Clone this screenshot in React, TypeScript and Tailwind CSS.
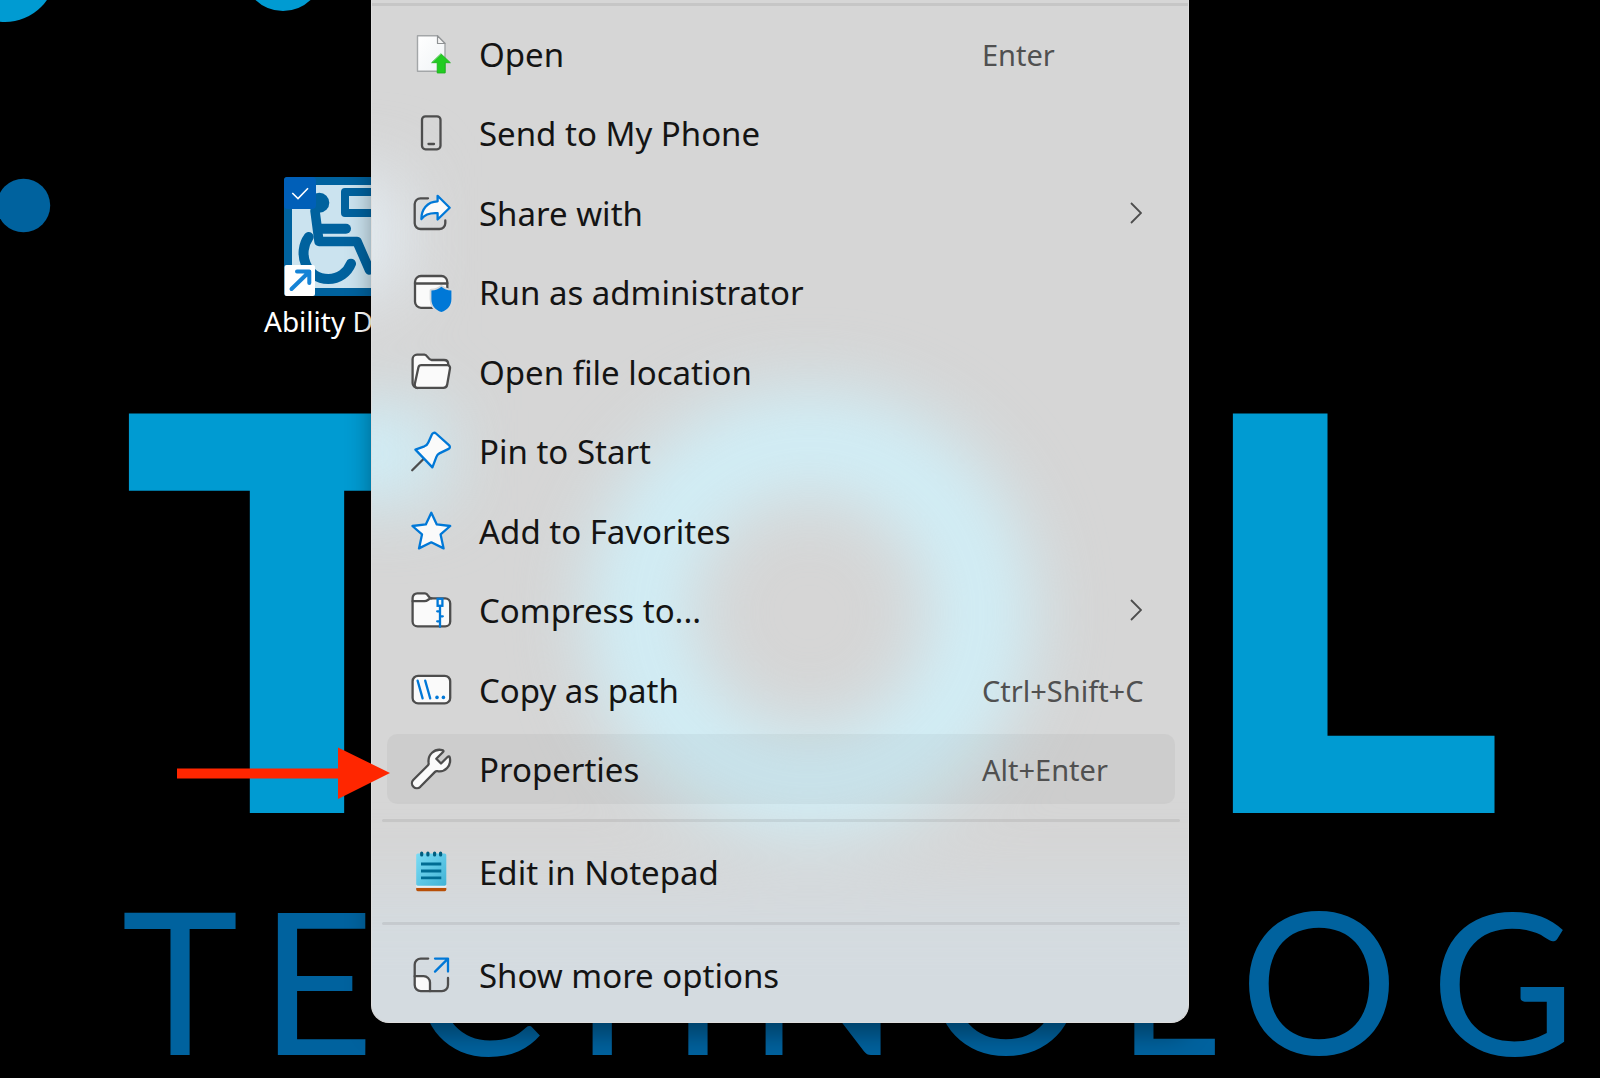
import type { ReactNode } from "react";

const GREY = "#4d4d4d";
const BLUE = "#0078d7";
const PAPER = "#fafafa";

function Icon({ children }: { children: ReactNode }) {
  return (
    <svg
      viewBox="0 0 40 40"
      className="size-10 shrink-0 overflow-visible"
      fill="none"
      strokeWidth="2.3"
      strokeLinecap="round"
      strokeLinejoin="round"
      aria-hidden="true"
    >
      {children}
    </svg>
  );
}

const OpenIcon = () => (
  <Icon>
    <defs>
      <linearGradient id="page" x1="0" y1="0" x2="1" y2="1">
        <stop offset="0" stopColor="#ffffff" />
        <stop offset="1" stopColor="#f0f3f6" />
      </linearGradient>
    </defs>
    <path d="M6.5 1.8H26.5L34 9.5V37.3H6.5Z" fill="url(#page)" stroke="#a3a6a8" strokeWidth="1.4" />
    <path d="M26.5 1.8V9.5H34Z" fill="#f4f4f4" stroke="#8f9294" strokeWidth="1.2" />
    <path d="M30.2 20L39.4 28.7H34.2V39H26.2V28.7H21Z" fill="#22cc22" stroke="#19b019" strokeWidth="0.8" strokeLinejoin="miter" />
  </Icon>
);

const PhoneIcon = () => (
  <Icon>
    <rect x="11" y="3.3" width="18.5" height="33" rx="3.5" stroke={GREY} />
    <path d="M17.5 31H23" stroke={GREY} />
  </Icon>
);

const ShareIcon = () => (
  <Icon>
    <path d="M17 5.3H9.5A5.8 5.8 0 0 0 3.7 11V30.3A5.8 5.8 0 0 0 9.5 36H28.5A5.8 5.8 0 0 0 34.3 30.3V27.5" stroke={GREY} />
    <path d="M10.4 26C10.4 16.5 16 8.6 26.6 8.3V2.8L38.7 14.7L26.6 26.5V20.2C19.5 19.6 14 21.4 10.4 26Z" fill={PAPER} stroke={BLUE} />
  </Icon>
);

const AdminIcon = () => (
  <Icon>
    <rect x="4" y="4" width="32.3" height="31.8" rx="6" fill={PAPER} stroke={GREY} />
    <path d="M4 11.5H36.3" stroke={GREY} />
    <path
      d="M30.4 14.8C33 17.2 36.4 18.4 40.4 18.6V27C40.4 33.8 36.6 38 30.4 40C24.2 38 20.4 33.8 20.4 27V18.6C24.4 18.4 27.8 17.2 30.4 14.8Z"
      fill={BLUE}
      stroke="#d6d8da"
      strokeWidth="3.6"
      paintOrder="stroke"
    />
  </Icon>
);

const FolderIcon = () => (
  <Icon>
    <path
      d="M6.5 36A5 5 0 0 1 1.6 31V7A4.5 4.5 0 0 1 6 2.7H13.5C16.5 2.7 17 8 20.5 8H33C35.5 8 37.2 9.7 37.2 12V14"
      fill={PAPER}
      stroke={GREY}
    />
    <path
      d="M10.5 13.2H36.5A2.6 2.6 0 0 1 39 16.4L36.2 32.5A4 4 0 0 1 32.3 35.9H6.5C4 35.9 3.4 33.8 3.9 31.6L7.4 15.6A3.1 3.1 0 0 1 10.5 13.2Z"
      fill={PAPER}
      stroke={GREY}
    />
  </Icon>
);

const PinIcon = () => (
  <Icon>
    <path d="M1.2 39.2L12.5 28" stroke={GREY} />
    <path
      d="M4.4 18.6L13.4 15.3C15.4 14.5 16.5 13.4 17.3 11.5L21 3.3C21.8 1.6 23.6 1.2 25 2.5L38.2 14.4C39.4 15.6 39 17.2 37.6 17.9L28.4 22.4C26.8 23.2 26 24.2 25.4 25.8L21.4 36.4Z"
      fill={PAPER}
      stroke={BLUE}
    />
  </Icon>
);

const StarIcon = () => (
  <Icon>
    <path
      d="M20.3 1.7L25.8 13.4L39.2 15L29.6 23.4L32.6 37.4L20.3 31.3L8 37.4L11 23.4L1.4 15L14.8 13.4Z"
      fill={PAPER}
      stroke={BLUE}
    />
  </Icon>
);

const ZipIcon = () => (
  <Icon>
    <path
      d="M1.6 8A4.7 4.7 0 0 1 6.3 3.3H14C17.5 3.3 17 8.4 20.5 8.4H34.2A5 5 0 0 1 39.2 13.4V31.4A5 5 0 0 1 34.2 36.4H6.6A5 5 0 0 1 1.6 31.4Z"
      fill={PAPER}
      stroke={GREY}
    />
    <path d="M1.6 11.2H13.5C17.3 11.2 17 8.4 20.5 8.4" stroke={GREY} />
    <rect x="26.6" y="8.8" width="4.8" height="7" fill={PAPER} stroke={BLUE} strokeLinejoin="miter" />
    <path d="M29 16V36.8M29 21.3H26.2M29 26.3H31.8M29 31.3H26.2" stroke={BLUE} />
  </Icon>
);

const PathIcon = () => (
  <Icon>
    <rect x="1.6" y="5.8" width="37.6" height="27.6" rx="5.5" fill={PAPER} stroke={GREY} />
    <path d="M6.6 10.6L11.6 28.4M14.2 10.6L19.2 28.4" stroke={BLUE} />
    <circle cx="26" cy="27.4" r="1.8" fill={BLUE} />
    <circle cx="32.4" cy="27.4" r="1.8" fill={BLUE} />
  </Icon>
);

const WrenchIcon = () => (
  <Icon>
    <path
      d="M2.2 31L17 16.2C17.8 15.4 17.8 14.6 17.6 13.5C16.6 6 23.2 -.8 31.2 1.1C32.6 1.5 32.8 2.2 32 3L25.3 9.8L30 14.5L36.8 7.8C37.6 7 38.4 7.2 38.7 8.3C40.8 16.8 33.8 23.6 26.4 22.2C25.4 22 24.7 22.2 24 22.9L9.3 37.8C7.4 39.6 4.4 39.6 2.5 37.8C.6 35.9 .5 32.8 2.2 31Z"
      fill={PAPER}
      stroke={GREY}
    />
  </Icon>
);

const NotepadIcon = () => (
  <Icon>
    <defs>
      <linearGradient id="pad" x1="0" y1="0" x2="1" y2="1">
        <stop offset="0" stopColor="#7bdcf5" />
        <stop offset="1" stopColor="#41b3d6" />
      </linearGradient>
    </defs>
    <path d="M5.2 35.8H35.3V37.6A1.6 1.6 0 0 1 33.7 39.2H6.8A1.6 1.6 0 0 1 5.2 37.6Z" fill="#b84f07" />
    <path d="M5.2 33H35.3V35.8H5.2Z" fill="#e9eef0" />
    <rect x="5.2" y="1.5" width="30.1" height="32.2" rx="1.6" fill="url(#pad)" />
    <path d="M10 12H30.3M10 19H30.3M10 25.8H30.3" stroke="#006c93" strokeWidth="2.8" strokeLinecap="butt" />
    <path d="M10.7 1V3M16.9 1V3M23.6 1V3M29.6 1V3" stroke="#005f80" strokeWidth="3.2" />
  </Icon>
);

const MoreIcon = () => (
  <Icon>
    <path d="M3.7 21.2H12.5A6.4 6.4 0 0 1 19 27.6V36.2H9.8A6.1 6.1 0 0 1 3.7 30.1Z" fill={PAPER} />
    <path d="M17.2 3.6H9.8A6.1 6.1 0 0 0 3.7 9.7V30.1A6.1 6.1 0 0 0 9.8 36.2H30.9A6.1 6.1 0 0 0 37 30.1V23" stroke={GREY} />
    <path d="M3.7 21.2H12.5A6.4 6.4 0 0 1 19 27.6V36.2" stroke={GREY} />
    <path d="M24 16.6L37 3.6M24 3.6H37V16.6" stroke={BLUE} />
  </Icon>
);

type Entry = { label: string; icon: ReactNode; keys?: string; submenu?: boolean; active?: boolean };

const entries: Entry[] = [
  { label: "Open", icon: <OpenIcon />, keys: "Enter" },
  { label: "Send to My Phone", icon: <PhoneIcon /> },
  { label: "Share with", icon: <ShareIcon />, submenu: true },
  { label: "Run as administrator", icon: <AdminIcon /> },
  { label: "Open file location", icon: <FolderIcon /> },
  { label: "Pin to Start", icon: <PinIcon /> },
  { label: "Add to Favorites", icon: <StarIcon /> },
  { label: "Compress to...", icon: <ZipIcon />, submenu: true },
  { label: "Copy as path", icon: <PathIcon />, keys: "Ctrl+Shift+C" },
  { label: "Properties", icon: <WrenchIcon />, keys: "Alt+Enter", active: true },
];

function MenuRow({ label, icon, keys, submenu, active }: Entry) {
  return (
    <button
      type="button"
      role="menuitem"
      className={
        "flex h-[70px] w-full items-center rounded-[10px] pl-6 text-left " +
        (active ? "bg-black/[0.04]" : "hover:bg-black/[0.04]")
      }
    >
      {icon}
      <span className="ml-7 flex-1 pt-0.5 text-[33px] leading-10 whitespace-nowrap text-[#141414]">{label}</span>
      {keys && <span className="w-[193px] shrink-0 pt-0.5 text-[29px] leading-10 whitespace-nowrap text-[#505050]">{keys}</span>}
      {submenu && (
        <svg viewBox="0 0 12 22" className="mr-[33px] h-[22px] w-3" fill="none" stroke="#4d4d4d" strokeWidth="1.8" aria-hidden="true">
          <path d="M1 1L11 11L1 21" />
        </svg>
      )}
    </button>
  );
}

const Divider = () => <hr className="mx-[-5px] my-[15px] h-[3px] rounded-full border-0 bg-black/[0.07]" />;

/* Frosted tint that the wallpaper casts through the menu surface. */
function FrostedGlow() {
  return (
    <div className="absolute inset-0 overflow-hidden rounded-b-[17px]" aria-hidden="true">
      <svg viewBox="0 0 819 1023" preserveAspectRatio="xMinYMin slice" className="h-full w-full">
        <g className="blur-[36px]">
          <rect x="-120" y="890" width="1060" height="250" fill="#d4dbe0" />
          <rect x="-120" y="177" width="150" height="119" fill="#e4edf3" />
          <rect x="-120" y="410" width="190" height="88" fill="#cff0fa" />
          <circle cx="438" cy="613" r="172" fill="none" stroke="#d0eff8" strokeWidth="98" />
        </g>
      </svg>
    </div>
  );
}

function ContextMenu() {
  return (
    <div
      role="menu"
      className="absolute top-0 left-[371px] w-[818px] rounded-b-[18px] border border-t-0 border-[#dedede] bg-[#d6d6d6] pr-[13px] pb-3 pl-[15px] shadow-[0_12px_24px_rgba(0,0,0,0.35)]"
    >
      <FrostedGlow />
      <div className="relative">
        <hr className="mr-[-13px] ml-[-15px] mt-[3px] mb-[13px] h-[3px] border-0 bg-black/[0.07]" />
        <div className="flex min-h-[785px] flex-col justify-between">
          {entries.map((entry) => (
            <MenuRow key={entry.label} {...entry} />
          ))}
        </div>
        <Divider />
        <MenuRow label="Edit in Notepad" icon={<NotepadIcon />} />
        <Divider />
        <MenuRow label="Show more options" icon={<MoreIcon />} />
      </div>
    </div>
  );
}

/* Horizontal centre of each letter on the lower wordmark line. */
const wordmark = [
  { char: "T", x: 180 },
  { char: "E", x: 317 },
  { char: "C", x: 478 },
  { char: "H", x: 650 },
  { char: "N", x: 823 },
  { char: "O", x: 1006 },
  { char: "L", x: 1167 },
  { char: "O", x: 1319 },
  { char: "G", x: 1503 },
];

function Wallpaper() {
  return (
    <svg viewBox="0 0 1600 1078" preserveAspectRatio="xMinYMin slice" className="absolute inset-0 h-full w-full">
      <circle cx="5" cy="-29" r="51" fill="#009bd2" />
      <circle cx="283" cy="-29" r="40" fill="#009bd2" />
      <circle cx="23.5" cy="205.5" r="26.7" fill="#00629e" />
      <g className="font-['Inter',sans-serif] font-extrabold" fontSize="549" textAnchor="middle" fill="#009bd2">
        <text x="297" y="813">T</text>
        <text x="1357" y="813">L</text>
      </g>
      <g className="font-['Lato',sans-serif]" fontSize="198" textAnchor="middle" fill="#00629e">
        {wordmark.map(({ char, x }) => (
          <text key={x} x={x} y="1055">
            {char}
          </text>
        ))}
      </g>
    </svg>
  );
}

function DesktopShortcut() {
  return (
    <div className="absolute top-[177px] left-[264px]">
      <div className="relative ml-5 size-[119px]">
        <svg viewBox="0 0 119 119" className="size-full" fill="none" stroke="#00629e" strokeLinecap="round" strokeLinejoin="round" aria-hidden="true">
          <rect width="119" height="119" rx="3" fill="#00629e" stroke="none" />
          <rect x="8" y="8" width="103" height="103" fill="#cbe3ef" stroke="none" />
          <rect x="61" y="15" width="46" height="21" strokeWidth="8" />
          <circle cx="35.3" cy="25.7" r="10" fill="#00629e" stroke="none" />
          <path d="M31 34L35 64.5H73L85.5 93" strokeWidth="9.5" />
          <path d="M36 51.7H62" strokeWidth="10" />
          <path d="M24.7 60C13 76 22 102 44.3 102C55 102 63.5 95.5 67 86.7" strokeWidth="10" />
          <rect x="0.5" y="88" width="30.5" height="31" rx="2" fill="#ffffff" stroke="none" />
          <path d="M7.5 112L25 95M13 94.5H25.3V106" stroke="#1583d6" strokeWidth="4" />
        </svg>
        <input
          id="shortcut"
          type="checkbox"
          defaultChecked
          className="absolute top-0 left-0 size-8 appearance-none rounded bg-[#005fb8]"
        />
        <svg viewBox="0 0 32 32" className="pointer-events-none absolute top-0 left-0 size-8" fill="none" stroke="#ffffff" strokeWidth="1.6" aria-hidden="true">
          <path d="M8.3 16L14 21.5L24 11.3" />
        </svg>
      </div>
      <label htmlFor="shortcut" className="mt-[5px] block text-[28px] leading-10 whitespace-nowrap text-white">
        Ability D
      </label>
    </div>
  );
}

export default function App() {
  return (
    <main className="relative min-h-screen w-full overflow-hidden bg-black font-['Noto_Sans','Open_Sans',sans-serif]">
      <Wallpaper />
      <DesktopShortcut />
      <ContextMenu />
      <svg viewBox="0 0 213 52" className="pointer-events-none absolute top-[747px] left-[177px] h-[52px] w-[213px]" fill="#ff2600" aria-hidden="true">
        <path d="M0 21.5H161V0.5L213 26L161 52V31.5H0Z" />
      </svg>
    </main>
  );
}
